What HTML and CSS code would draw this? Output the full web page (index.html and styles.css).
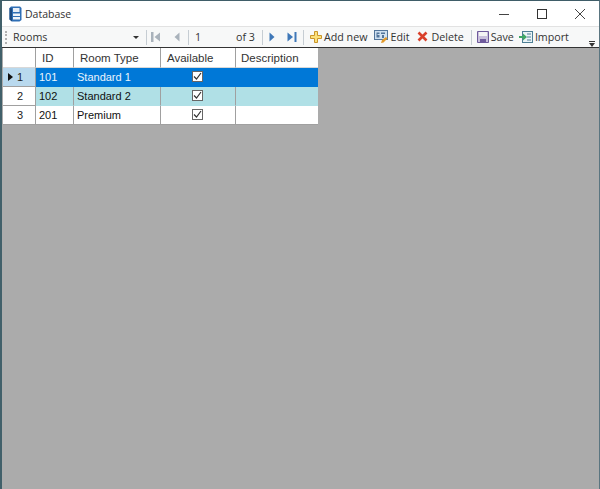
FILE: index.html
```html
<!DOCTYPE html>
<html lang="en">
<head>
<meta charset="utf-8">
<title>Database</title>
<link rel="stylesheet" href="styles.css">
</head>
<body>
<div class="window">
  <header class="titlebar">
    <svg class="appicon" width="13" height="16" viewBox="0 0 13 16"><path d="M2 0.500h9l1.500 1.500v12l-2 1.500H3l-2.500-2V2z" fill="#2f6fb5"/><path d="M4 2h6.500v4H4z" fill="#e6eef7"/><path d="M4 7.500h7v2.500H4zM4 11h7v2.500H4z" fill="#f0f5fa"/><path d="M0.500 2v11.500L3 15.500V2.500z" fill="#1c4a80"/></svg>
    <span class="title">Database</span>
    <div class="controls">
      <svg width="12" height="12" viewBox="0 0 12 12"><path d="M1 6.500h10" stroke="#444" stroke-width="1"/></svg>
      <svg width="12" height="12" viewBox="0 0 12 12"><rect x="1.500" y="1.500" width="9" height="9" fill="none" stroke="#333"/></svg>
      <svg width="12" height="12" viewBox="0 0 12 12"><path d="M1 1l10 10M11 1L1 11" stroke="#444" fill="none"/></svg>
    </div>
  </header>
  <nav class="toolbar">
    <span class="grip"></span>
    <div class="combo"><span>Rooms</span><span class="caret"></span></div>
    <span class="sep"></span>
    <svg class="nav" width="12" height="12" viewBox="0 0 12 12"><path d="M1 1h2.500v10H1z" fill="#a9b2bb"/><path d="M10 1.500v9L4.500 6z" fill="#a9b2bb"/></svg>
    <svg class="nav prev" width="12" height="12" viewBox="0 0 12 12"><path d="M8.500 1.500v9L3.500 6z" fill="#a9b2bb"/></svg>
    <span class="sep"></span>
    <span class="pos">1</span>
    <span class="of">of 3</span>
    <span class="sep"></span>
    <svg class="nav next" width="12" height="12" viewBox="0 0 12 12"><path d="M3.500 1.500v9l5-4.500z" fill="#3f78b8"/></svg>
    <svg class="nav last" width="12" height="12" viewBox="0 0 12 12"><path d="M1.500 1.500v9L7 6z" fill="#3f78b8"/><path d="M8.500 1h2v10h-2z" fill="#3f78b8"/></svg>
    <span class="sep"></span>
    <span class="btn add"><svg width="14" height="14" viewBox="0 0 14 14"><path d="M5.500 1.500h3v4h4v3h-4v4h-3v-4h-4v-3h4z" fill="#fbe07a" stroke="#c9952a"/></svg>Add new</span>
    <span class="btn edit"><svg width="16" height="15" viewBox="0 0 16 15"><rect x="1.500" y="1.500" width="13" height="9" fill="#cfe0f0" stroke="#53759a"/><path d="M3.500 3.500h3v1.500h-2v1h2v2.500h-3zM8 3.500h4V5H8zM9 6h2v3H9z" fill="#53759a"/><path d="M8 14l1-3 4-3 1.500 1.500-4 4z" fill="#e39a2a"/></svg>Edit</span>
    <span class="btn del"><svg width="13" height="13" viewBox="0 0 13 13"><path d="M2.500 2.500l8 8M10.500 2.500l-8 8" stroke="#d9402a" stroke-width="2.600" fill="none"/></svg>Delete</span>
    <span class="sep"></span>
    <span class="btn save"><svg width="14" height="14" viewBox="0 0 14 14"><path d="M1.500 1.500h11v11h-11z" fill="#c9c0dc" stroke="#6f5a9c"/><path d="M3 2h8v4H3z" fill="#f4f4f4"/><path d="M4 9h6v3.500H4z" fill="#6f5a9c"/></svg>Save</span>
    <span class="btn import"><svg width="15" height="14" viewBox="0 0 15 14"><rect x="3.500" y="1.500" width="10" height="11" fill="#eaf3f6" stroke="#4d7f95"/><path d="M8 4h4M8 7h4M8 10h4" stroke="#4d7f95"/><path d="M0 6h4V3.500L8 7l-4 3.500V8H0z" fill="#3fa765"/></svg>Import</span>
    <span class="overflow"></span>
  </nav>
  <main class="canvas">
    <table class="grid">
      <colgroup><col class="c0"><col class="c1"><col class="c2"><col class="c3"><col class="c4"></colgroup>
      <thead>
        <tr><th></th><th>ID</th><th>Room Type</th><th>Available</th><th>Description</th></tr>
      </thead>
      <tbody>
        <tr class="selected">
          <th class="rowhead current"><span class="arrow"></span>1</th><td>101</td><td>Standard 1</td><td class="mid"><span class="check"><svg width="11" height="11" viewBox="0 0 11 11"><path d="M2 5.500l2.500 2.500 4.500-6" fill="none" stroke="#333" stroke-width="1.200"/></svg></span></td><td></td>
        </tr>
        <tr class="alt">
          <th class="rowhead">2</th><td>102</td><td>Standard 2</td><td class="mid"><span class="check"><svg width="11" height="11" viewBox="0 0 11 11"><path d="M2 5.500l2.500 2.500 4.500-6" fill="none" stroke="#333" stroke-width="1.200"/></svg></span></td><td></td>
        </tr>
        <tr>
          <th class="rowhead">3</th><td>201</td><td>Premium</td><td class="mid"><span class="check"><svg width="11" height="11" viewBox="0 0 11 11"><path d="M2 5.500l2.500 2.500 4.500-6" fill="none" stroke="#333" stroke-width="1.200"/></svg></span></td><td></td>
        </tr>
      </tbody>
    </table>
  </main>
</div>
</body>
</html>
```
FILE: styles.css
```css
* { box-sizing: border-box; }
html, body { margin: 0; height: 100%; }
body { font: 12px "Open Sans", "Liberation Sans", sans-serif; color: #222; }
.window {
  width: 600px; height: 489px; display: flex; flex-direction: column;
  border-top: 1px solid #3f5d68; border-left: 2px solid #41606a; border-right: 1px solid #5a7580;
  background: #fff;
}
.titlebar { height: 25px; display: flex; align-items: center; padding-left: 7px; flex: none; }
.appicon { flex: none; }
.title { margin-left: 3px; font: 10.500px "Open Sans", sans-serif; color: #333; }
.controls { margin-left: auto; display: flex; gap: 26px; padding-right: 13px; align-items: center; }
.toolbar {
  height: 22px; flex: none; display: flex; align-items: center;
  background: #f7f8f8; border-top: 1px solid #e2e2e2; border-bottom: 1px solid #333;
  font: 10.700px "Open Sans", sans-serif; color: #333; position: relative;
}
.grip { width: 2px; height: 13px; margin-left: 3px; border-left: 2px dotted #b0b0b0; flex: none; }
.combo { width: 130px; margin-left: 6px; display: flex; justify-content: space-between; align-items: center; flex: none; }
.caret { border: 3px solid transparent; border-top: 3px solid #333; border-bottom: 0; margin-right: 4px; }
.sep { width: 1px; height: 15px; background: #c6cdd3; flex: none; margin: 0 3px; }
.nav { flex: none; }
.prev { margin-left: 9px; margin-right: 2px; }
.pos { width: 41px; margin-left: 3px; flex: none; }
.of { width: 23px; flex: none; }
.last { margin-left: 8px; margin-right: 2px; }
.btn { display: inline-flex; align-items: center; gap: 1px; flex: none; white-space: nowrap; padding-bottom: 1px; }
.add { margin-left: 2px; }
.edit { margin-left: 6px; }
.del { margin-left: 7px; margin-right: 4px; gap: 2px; }
.save { margin-left: 1px; }
.import { margin-left: 5px; }
.overflow { position: absolute; right: 4px; bottom: 0; width: 6px; height: 6px; background: linear-gradient(#333 1px, transparent 1px 2px, #333 2px); clip-path: polygon(0 0, 100% 0, 100% 33%, 50% 100%, 0 33%); }
.canvas { flex: 1; background: #ababab; }
.grid { border-collapse: separate; border-spacing: 0; table-layout: fixed; width: 315px; font: 11px "Liberation Sans", Arial, sans-serif; background: #fff; margin-left: 1px; }
.c0 { width: 33px; } .c1 { width: 38px; } .c2 { width: 87px; } .c3 { width: 75px; } .c4 { width: 82px; }
.grid th, .grid td { padding: 0; font-weight: 400; border-right: 1px solid #a0a0a0; border-bottom: 1px solid #a0a0a0; white-space: nowrap; overflow: hidden; }
.grid thead th { height: 20px; text-align: left; padding-left: 6px; font-size: 11.500px; color: #333; background: #fff; border-bottom: 1px solid #d8d8d8; }
.grid thead th:last-child { padding-left: 5px; }
.grid thead th:last-child, .grid td:last-child { border-right: 0; }
.grid td { height: 19px; padding-left: 3px; color: #111; }
.grid td.mid { text-align: center; padding: 0 2px 0 0; }
.rowhead { text-align: center; background: #fff; color: #222; position: relative; padding-left: 2px !important; }
.grid .current { background: #b9d9ee; }
.arrow { position: absolute; left: 5px; top: 5px; border: 4px solid transparent; border-left: 5px solid #111; border-right: 0; }
.selected td { background: #0078d7; color: #eaf4fc; border-bottom-color: #0078d7; border-right-color: #0078d7; }
.alt td { background: #b0e0e6; border-bottom-color: #b0e0e6; }
.check { display: inline-flex; width: 11px; height: 11px; background: #fff; border: 1px solid #666; vertical-align: -1px; }
.check svg { margin: -1px; flex: none; }
```
